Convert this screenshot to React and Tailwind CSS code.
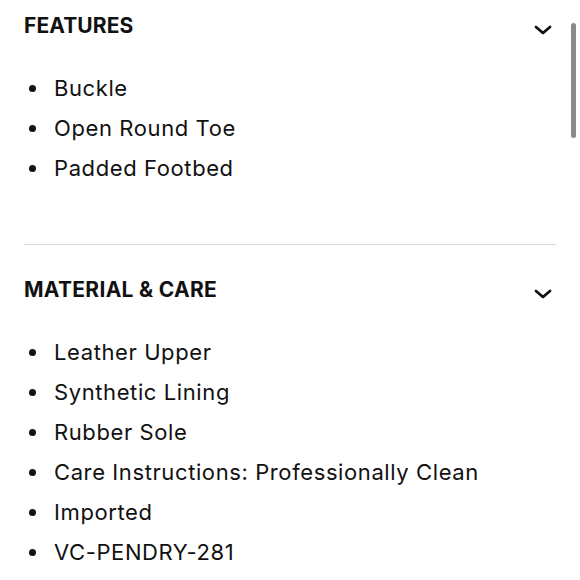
import React from "react";

const Chevron = () => (
  <svg width="18" height="10" viewBox="0 0 18 10" className="mt-[8px] mr-[4px]">
    <path d="M2 2 L9 8 L16 2" fill="none" stroke="#111" strokeWidth="2.8" strokeLinecap="round" strokeLinejoin="round" />
  </svg>
);

const Item = ({ children }) => (
  <li className="flex items-center h-[40px]">
    <span className="w-[7px] h-[7px] rounded-full bg-[#111] ml-[5px] mr-[18px] shrink-0" />
    <span>{children}</span>
  </li>
);

export default function App() {
  const font = { fontFamily: "Inter, 'Noto Sans', sans-serif" };
  return (
    <div className="relative w-[580px] h-[580px] bg-white overflow-hidden text-[#111]" style={font}>
      <div className="px-6 pt-[6px]">
        <div className="flex justify-between items-center h-[40px]">
          <h2 className="text-[21px] font-bold tracking-[0.1px]">FEATURES</h2>
          <Chevron />
        </div>
        <ul className="mt-[22px] text-[22px] tracking-[0.6px]">
          <Item>Buckle</Item>
          <Item>Open Round Toe</Item>
          <Item>Padded Footbed</Item>
        </ul>
        <div className="mt-[56px] h-px bg-[#d6d6d6]" />
        <div className="mt-[25px] flex justify-between items-center h-[40px]">
          <h2 className="text-[21px] font-bold tracking-[0.3px]">MATERIAL &amp; CARE</h2>
          <Chevron />
        </div>
        <ul className="mt-[22px] text-[22px] tracking-[0.6px]">
          <Item>Leather Upper</Item>
          <Item>Synthetic Lining</Item>
          <Item>Rubber Sole</Item>
          <Item>Care Instructions: Professionally Clean</Item>
          <Item>Imported</Item>
          <Item>VC-PENDRY-281</Item>
        </ul>
      </div>
      <div className="absolute left-[571px] top-[23px] w-[5px] h-[115px] rounded-full bg-[#8a8a8a]" />
    </div>
  );
}
